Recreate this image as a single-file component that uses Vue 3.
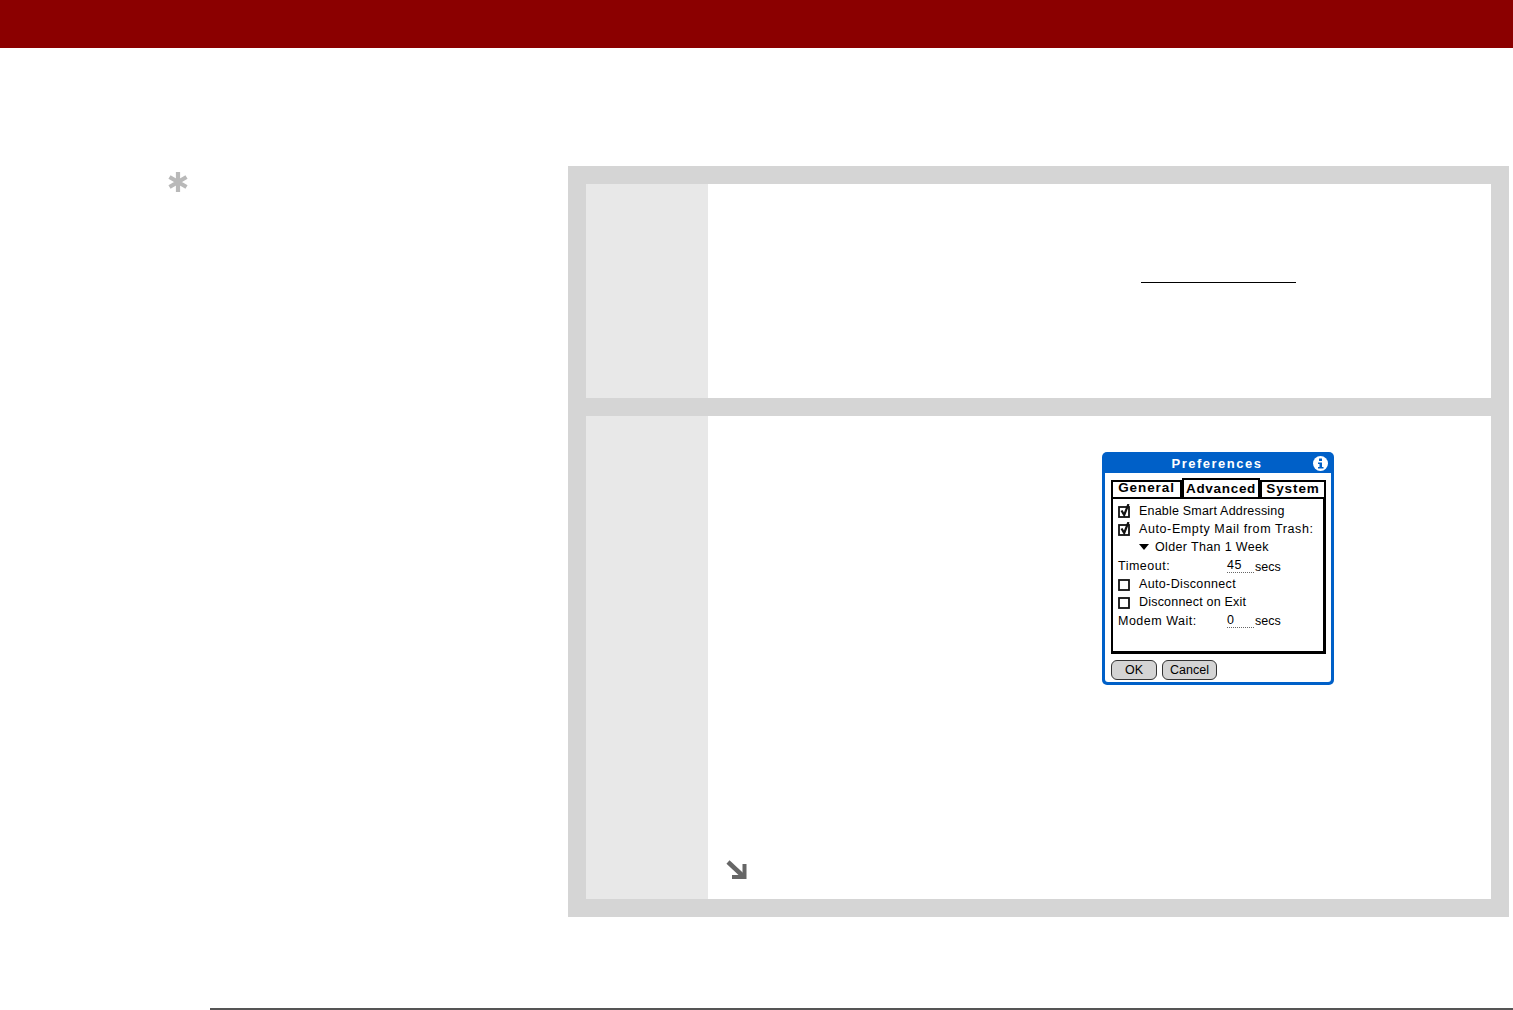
<script setup>
const rows = [
  { type: 'check', on: true, label: 'Enable Smart Addressing', fit: 'fit-a' },
  { type: 'check', on: true, label: 'Auto-Empty Mail from Trash:', fit: 'fit-b' },
  { type: 'pick', label: 'Older Than 1 Week', fit: 'fit-c' },
  { type: 'field', label: 'Timeout:', value: '45', fit: 'fit-d low' },
  { type: 'check', on: false, label: 'Auto-Disconnect', fit: 'fit-c' },
  { type: 'check', on: false, label: 'Disconnect on Exit', fit: 'fit-a' },
  { type: 'field', label: 'Modem Wait:', value: '0', fit: 'fit-d' },
]
</script>

<template>
  <div class="page">
    <header class="topbar"></header>
    <main class="main">
      <aside class="side">
        <svg class="star" width="22" height="22" viewBox="0 0 22 22" aria-hidden="true">
          <path d="M11 1v20M2.500 6l17 10M19.500 6l-17 10" stroke="#b9b9b9" stroke-width="4.200" fill="none" />
        </svg>
      </aside>
      <section class="panel">
        <div class="step step-one">
          <div class="num"></div>
          <div class="body body-one"><span class="rule"></span></div>
        </div>
        <div class="step step-two">
          <div class="num"></div>
          <div class="body body-two">
            <div class="device">
              <div class="title">
                <span>Preferences</span>
                <svg class="info" width="15" height="15" viewBox="0 0 15 15" aria-hidden="true">
                  <circle cx="7.500" cy="7.500" r="7.500" fill="#fff" />
                  <rect x="6" y="2.500" width="3" height="2.500" fill="#0060c8" />
                  <path d="M5 6.500h4v4.500h1.500v1.500h-5.500v-1.500h1.500v-3h-1.500z" fill="#0060c8" />
                </svg>
              </div>
              <div class="screen">
                <div class="tabs">
                  <span class="tab tab-general">General</span>
                  <span class="tab tab-active">Advanced</span>
                  <span class="tab tab-system">System</span>
                </div>
                <div class="sheet">
                  <div v-for="row in rows" :key="row.label" class="line" :class="['line-' + row.type, row.fit]">
                    <template v-if="row.type === 'check'">
                      <svg class="box" width="13" height="14" viewBox="0 0 13 14" aria-hidden="true">
                        <rect x="1" y="3" width="10" height="10" fill="#fff" stroke="#111" stroke-width="1.800" />
                        <path v-if="row.on" d="M3.500 6.500l2.700 4.500 4.300-11" fill="none" stroke="#111" stroke-width="2.200" />
                      </svg>
                      <span class="check-label">{{ row.label }}</span>
                    </template>
                    <template v-else-if="row.type === 'pick'">
                      <span class="tri"></span>
                      <span>{{ row.label }}</span>
                    </template>
                    <template v-else>
                      <span class="field-label">{{ row.label }}</span>
                      <span class="field-value">{{ row.value }}</span>
                      <span class="secs">secs</span>
                    </template>
                  </div>
                </div>
                <div class="buttons">
                  <span class="btn btn-ok">OK</span>
                  <span class="btn btn-cancel">Cancel</span>
                </div>
              </div>
            </div>
            <svg class="arrow" width="22" height="22" viewBox="0 0 22 22" aria-hidden="true">
              <path d="M2 3l15 14" stroke="#666" stroke-width="4.500" fill="none" />
              <path d="M6 18h12.500v-13" stroke="#666" stroke-width="4" fill="none" />
            </svg>
          </div>
        </div>
      </section>
    </main>
    <footer class="foot"></footer>
  </div>
</template>

<style scoped>
.page { width: 1513px; height: 1010px; overflow: hidden; background: #fff; font-family: "Liberation Sans", Arial, sans-serif; }
.topbar { height: 48px; background: #8b0000; }
.main { display: flex; padding: 118px 4px 0 0; }
.side { width: 568px; flex: none; padding: 5px 0 0 167px; box-sizing: border-box; }
.star { display: block; }
.panel { width: 941px; box-sizing: border-box; background: #d5d5d5; padding: 18px; display: flex; flex-direction: column; gap: 18px; }
.step { display: flex; background: #fff; }
.step-one { height: 214px; }
.step-two { height: 483px; }
.num { width: 122px; flex: none; background: #e8e8e8; }
.body { flex: 1; min-width: 0; }
.body-one { padding: 98px 0 0 433px; box-sizing: border-box; }
.rule { display: block; width: 155px; height: 1px; background: #000; }
.body-two { display: flex; flex-direction: column; box-sizing: border-box; padding: 36px 0 18px 18px; }
.arrow { display: block; margin-top: auto; }
.device { width: 232px; height: 233px; margin-left: 376px; box-sizing: border-box; background: #0060c8; border-radius: 5px; padding: 0 3px 3px; display: flex; flex-direction: column; color: #000; font-size: 12.5px; }
.title { height: 21px; flex: none; position: relative; color: #fff; font-weight: 700; font-size: 13px; letter-spacing: 1.5px; line-height: 23px; text-align: center; padding-right: 2px; }
.info { position: absolute; right: 3px; top: 4px; }
.screen { flex: 1; background: #fff; display: flex; flex-direction: column; padding: 5px 5px 2px 6px; border-radius: 0 0 3px 3px; }
.tabs { height: 19px; flex: none; display: flex; align-items: flex-end; font-weight: 700; font-size: 13.500px; letter-spacing: 0.9px; }
.tab { display: block; box-sizing: border-box; border: 2px solid #000; border-bottom: 0; text-align: center; }
.tab-general { width: 71px; height: 17px; line-height: 11px; }
.tab-active { width: 78px; height: 19px; line-height: 17px; letter-spacing: 0.7px; }
.tab-system { width: 66px; height: 17px; line-height: 14px; }
.sheet { height: 157px; flex: none; box-sizing: border-box; border: 2px solid #000; border-bottom-width: 3px; border-right-width: 3px; padding: 2.600px 0 0 5px; }
.line { height: 18.300px; line-height: 18px; display: flex; align-items: center; white-space: nowrap; }
.fit-a { letter-spacing: 0.2px; }
.fit-b { letter-spacing: 0.6px; }
.fit-c { letter-spacing: 0.35px; }
.fit-d { letter-spacing: 0.5px; }
.box { flex: none; margin-right: 8px; }
.tri { width: 0; height: 0; border-left: 5.500px solid transparent; border-right: 5.500px solid transparent; border-top: 6px solid #000; margin: 0 6px 0 21px; }
.field-label { width: 109px; flex: none; }
.field-value { width: 27px; flex: none; margin-right: 1px; border-bottom: 1px dotted #666; line-height: 13px; box-sizing: border-box; height: 14px; margin-top: 1px; }
.secs { letter-spacing: 0; }
.low .secs { padding-top: 3px; }
.buttons { display: flex; gap: 5px; margin-top: 6px; }
.btn { box-sizing: border-box; height: 20px; line-height: 19px; text-align: center; background: #d4d4d4; border: 1.500px solid #333; border-radius: 6px; }
.btn-ok { width: 46px; }
.btn-cancel { width: 55px; }
.foot { height: 2px; margin: 91px 0 0 210px; background: #555; }
</style>
